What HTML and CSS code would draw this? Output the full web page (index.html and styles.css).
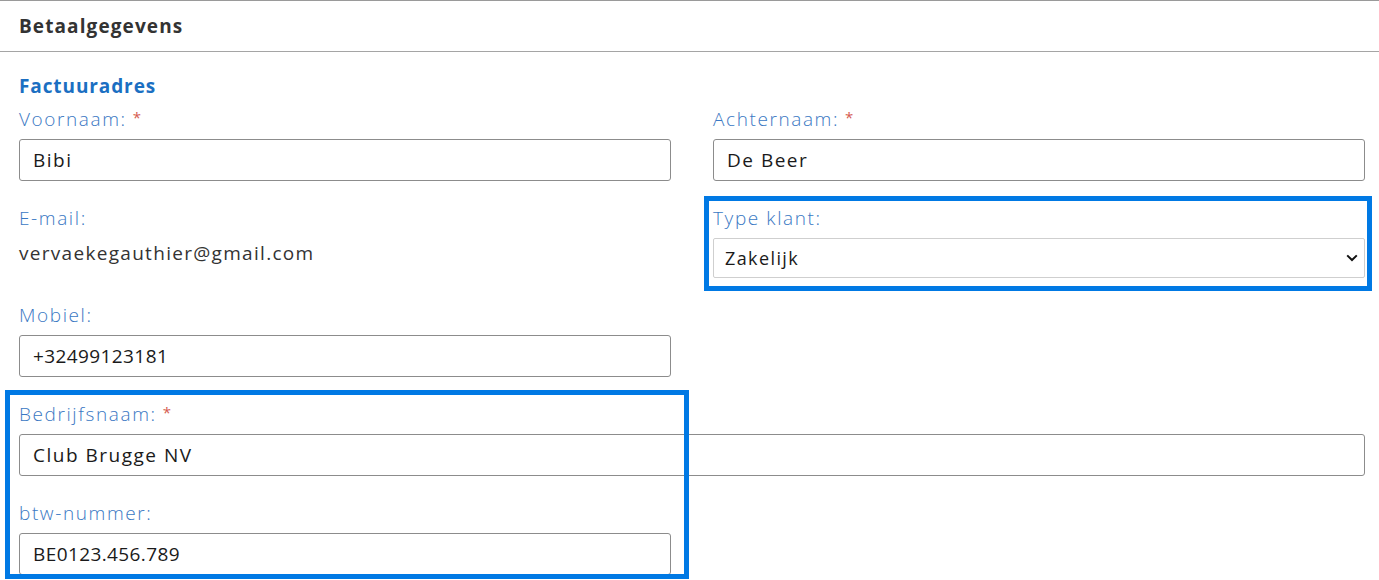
FILE: index.html
```html
<!DOCTYPE html>
<html lang="nl">
<head>
<meta charset="utf-8">
<title>Betaalgegevens</title>
<link rel="stylesheet" href="styles.css">
</head>
<body>
<div class="page">
  <section class="panel">
    <header class="panel-head">Betaalgegevens</header>
    <div class="panel-body">
      <h3 class="section-title">Factuuradres</h3>
      <div class="form-grid">
        <div class="field">
          <label class="label">Voornaam:<span class="req">*</span></label>
          <input class="input" type="text" value="Bibi">
        </div>
        <div class="field">
          <label class="label">Achternaam:<span class="req">*</span></label>
          <input class="input" type="text" value="De Beer">
        </div>
        <div class="field">
          <label class="label">E-mail:</label>
          <div class="static">vervaekegauthier@gmail.com</div>
        </div>
        <div class="field">
          <label class="label">Type klant:</label>
          <div class="select-wrap">
            <select class="select">
              <option>Zakelijk</option>
              <option>Particulier</option>
            </select>
            <svg class="chev" viewBox="0 0 12 8" width="12" height="8"><path d="M1.2 1.4 L6 6 L10.8 1.4" fill="none" stroke="#111" stroke-width="2"/></svg>
          </div>
        </div>
        <div class="field">
          <label class="label">Mobiel:</label>
          <input class="input num" type="text" value="+32499123181">
        </div>
        <div class="field empty"></div>
        <div class="field wide">
          <label class="label">Bedrijfsnaam:<span class="req">*</span></label>
          <input class="input" type="text" value="Club Brugge NV">
        </div>
        <div class="field">
          <label class="label">btw-nummer:</label>
          <input class="input num" type="text" value="BE0123.456.789">
        </div>
      </div>
    </div>
  </section>
  <div class="highlight hl-type"></div>
  <div class="highlight hl-company"></div>
</div>
</body>
</html>
```
FILE: styles.css
```css
* { box-sizing: border-box; }
html, body { margin: 0; padding: 0; background: #fff; }
body {
  font-family: "Open Sans", "Liberation Sans", sans-serif;
  color: #222;
}
.page { position: relative; width: 1379px; height: 580px; overflow: hidden; }
.panel { border-top: 1px solid #9a9a9a; }
.panel-head {
  height: 51px;
  display: flex;
  align-items: center;
  padding: 0 19px;
  font-size: 19px;
  letter-spacing: 1.1px;
  font-weight: 700;
  color: #333;
  border-bottom: 1px solid #a5a5a5;
}
.panel-body { padding: 22px 14px 0 19px; }
.section-title {
  margin: 0 0 10px;
  font-size: 19px;
  letter-spacing: 0.9px;
  line-height: 24px;
  font-weight: 700;
  color: #1b6fc2;
}
.form-grid {
  display: grid;
  grid-template-columns: 1fr 1fr;
  column-gap: 42px;
  row-gap: 26px;
}
.field { display: flex; flex-direction: column; }
.field.wide { grid-column: 1 / 3; }
.label {
  height: 22px;
  line-height: 22px;
  margin-bottom: 9px;
  font-size: 19px;
  letter-spacing: 1.6px;
  font-weight: 300;
  color: #3a78c3;
}
.req {
  color: #d55a4f;
  font-weight: 400;
  font-size: 15px;
  letter-spacing: 0;
  margin-left: 6px;
  vertical-align: top;
  line-height: 18px;
}
.input {
  height: 42px;
  width: 100%;
  border: 1px solid #8c8c8c;
  border-radius: 3px;
  padding: 0 13px;
  font-family: inherit;
  font-size: 19px;
  letter-spacing: 1.5px;
  color: #1a1a1a;
  background: #fff;
  outline: none;
}
.input.num { letter-spacing: 0.4px; }
.static {
  height: 30px;
  line-height: 30px;
  font-size: 19px;
  letter-spacing: 1.3px;
  color: #333;
  font-weight: 400;
}
.select-wrap { position: relative; height: 40px; }
.select {
  -webkit-appearance: none;
  appearance: none;
  width: 100%;
  height: 40px;
  border: 1px solid #cfcfcf;
  border-radius: 2px;
  padding: 0 11px;
  font-family: inherit;
  font-size: 18px;
  letter-spacing: 1.4px;
  color: #1a1a1a;
  background: #fff;
  outline: none;
}
.chev { position: absolute; right: 7px; top: 16px; pointer-events: none; }
.highlight {
  position: absolute;
  border: 5px solid #0079e4;
  pointer-events: none;
}
.hl-type { left: 704px; top: 196px; width: 668px; height: 95px; }
.hl-company { left: 5px; top: 390px; width: 684px; height: 189px; }
```
